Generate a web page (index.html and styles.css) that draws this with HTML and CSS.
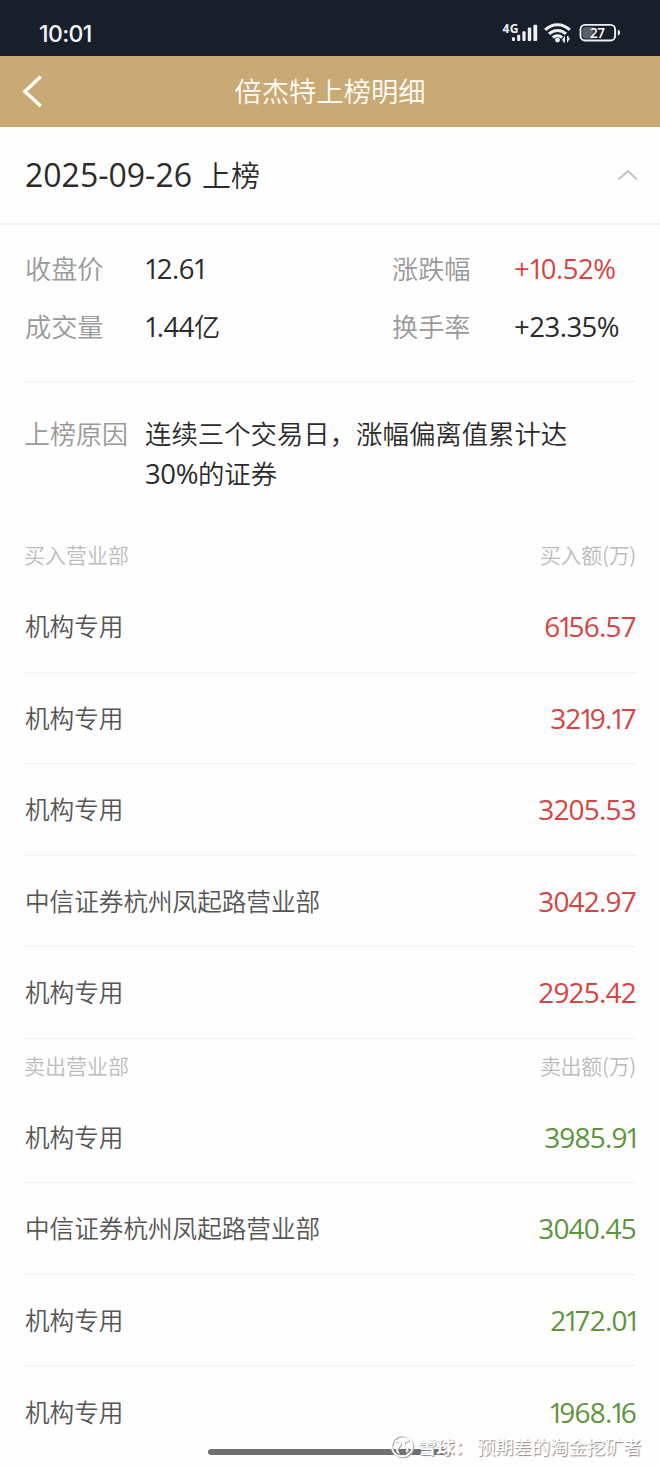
FILE: index.html
```html
<!DOCTYPE html>
<html lang="zh-CN">
<head>
<meta charset="utf-8">
<title>倍杰特上榜明细</title>
<link rel="stylesheet" href="styles.css">
</head>
<body>
<div class="screen">
  <header class="status">
    <span class="clock">10:01</span>
    <svg class="status-icons" width="120" height="26" viewBox="0 0 120 26">
      <text class="net" x="0.5" y="12.5" textLength="16">4G</text>
      <g fill="#eef0f4">
        <rect x="10" y="17.2" width="3" height="3.8" rx="1"/>
        <rect x="15.2" y="14.8" width="3" height="6.2" rx="1"/>
        <rect x="20.4" y="11.2" width="3.2" height="9.8" rx="1"/>
        <rect x="25.8" y="7.6" width="3.4" height="13.4" rx="1"/>
        <rect x="31.4" y="4.8" width="3.8" height="16.2" rx="1"/>
        <circle cx="55.5" cy="20" r="2.4"/>
        <path d="M63 15.600v7h-1.700v-2h-1.600zM65 23v-7h1.600v2h1.600z"/>
      </g>
      <g fill="none" stroke="#eef0f4" stroke-width="3">
        <path d="M43.200 9.900c7-6.900 17.500-6.900 24.600 0M47 13.900c4.900-4.700 12.100-4.700 17 0M50.800 17.600c2.700-2.600 6.700-2.600 9.400 0"/>
        <rect x="78.500" y="4.900" width="34.600" height="15.600" rx="4.500" stroke-width="1.900"/>
      </g>
      <path d="M83 7h8.500v11.400H83a2.600 2.600 0 0 1-2.600-2.600v-6.200A2.600 2.600 0 0 1 83 7z" fill="#5b606b"/>
      <path d="M115.800 9.800c3 .3 3 5.300 0 5.600z" fill="#eef0f4"/>
      <text class="charge" x="88" y="17.500" textLength="15">27</text>
    </svg>
  </header>
  <nav class="titlebar">
    <svg class="back" width="22" height="34" viewBox="0 0 22 34"><path d="M19.800 1.500 3.800 16.500l16 14.500" fill="none" stroke="#fff" stroke-width="3.400"/></svg>
    <h1>倍杰特上榜明细</h1>
  </nav>
  <section class="day">
    <h2><span class="date">2025-09-26</span>上榜</h2>
    <svg width="22" height="14" viewBox="0 0 22 14"><path d="M2.500 11.500 12 3l9 8.500" fill="none" stroke="#c4c4c4" stroke-width="1.900"/></svg>
  </section>
  <main class="body">
    <dl class="stats">
      <dt>收盘价</dt><dd class="lead"><em>1</em>2.<i>6</i><em>1</em></dd>
      <dt>涨跌幅</dt><dd class="up"><i>+</i><em>1</em>0.52%</dd>
      <dt>成交量</dt><dd class="lead"><em>1</em>.44<span class="unit">亿</span></dd>
      <dt>换手率</dt><dd>+23.35%</dd>
    </dl>
    <div class="reason">
      <span class="reason-label">上榜原因</span>
      <p>连续三个交易日，涨幅偏离值累计达<br><span class="pct">30%</span>的证券</p>
    </div>
    <section class="buy">
      <div class="cols"><span>买入营业部</span><span class="amount">买入额(万)</span></div>
      <div class="row"><span>机构专用</span><b><i>6</i><em>1</em>56.57</b></div>
      <div class="row"><span>机构专用</span><b>3<i>2</i><em>1</em>9<i>.</i><em>1</em>7</b></div>
      <div class="row"><span>机构专用</span><b>3205.53</b></div>
      <div class="row"><span>中信证券杭州凤起路营业部</span><b>3042.97</b></div>
      <div class="row"><span>机构专用</span><b>2925.42</b></div>
    </section>
    <section class="sell">
      <div class="cols"><span>卖出营业部</span><span class="amount">卖出额(万)</span></div>
      <div class="row"><span>机构专用</span><b>3985.<i>9</i><em>1</em></b></div>
      <div class="row"><span>中信证券杭州凤起路营业部</span><b>3040.45</b></div>
      <div class="row"><span>机构专用</span><b><i>2</i><em>1</em>72.<i>0</i><em>1</em></b></div>
      <div class="row"><span>机构专用</span><b><em>1</em>968<i>.</i><em>1</em>6</b></div>
    </section>
  </main>
  <div class="home-bar"></div>
  <div class="watermark">
    <svg width="25" height="25" viewBox="0 0 25 25"><g fill="none" stroke-width="1.600"><g stroke="#aaa"><circle cx="13" cy="13" r="10.500"/><path d="M6 8c5 0 7 2 4 5s-3 5 0 7M20 7c-5 1-7 4-4 6s3 4 1 6"/></g><g stroke="#fff"><circle cx="12" cy="12" r="10.500"/><path d="M5 7c5 0 7 2 4 5s-3 5 0 7M19 6c-5 1-7 4-4 6s3 4 1 6"/></g></g></svg>
    <span class="brand">雪球：</span><span class="author">预期差的淘金挖矿者</span>
  </div>
</div>
</body>
</html>
```

FILE: styles.css
```css
* { box-sizing: border-box; margin: 0; padding: 0; }
body { background: #fefefe; font-family: "Noto Sans CJK SC", sans-serif; font-weight: 350; }
.screen { position: relative; width: 660px; height: 1467px; overflow: hidden; background: #fefefe; color: #2b2b2b; }

.status { display: flex; justify-content: space-between; height: 56px; padding: 20px 38px 0 39px; background: #181f2b; }
.clock { font: 500 23px/28px "Inter", sans-serif; letter-spacing: -0.6px; color: #f3f5f8; }
.status-icons { margin: 0 0 0 auto; flex: none; }
.net { font: 700 12px "Open Sans", sans-serif; fill: #eef0f4; }
.charge { font: 600 13.5px "Open Sans", sans-serif; fill: #fff; }

.titlebar { display: grid; grid-template-columns: 22px 1fr 22px; align-items: center; height: 71px; padding: 0 21px; background: #c9a974; }
.titlebar h1 { padding-bottom: 3px; font-size: 27.3px; line-height: 40px; font-weight: 350; color: #fffdf8; text-align: center; }

.day { display: flex; align-items: center; justify-content: space-between; height: 98px; padding: 0 22px 0 25px; border-bottom: 2px solid #f5f5f5; }
.day h2 { display: flex; align-items: baseline; gap: 10px; padding-bottom: 1px; font-size: 29px; line-height: 44px; font-weight: 350; }
.date { font-family: "Open Sans", sans-serif; font-size: 32px; font-weight: 400; }

.body { padding: 0 24px; }
.stats { display: grid; grid-template-columns: 121px 246px 122px 1fr; grid-auto-rows: 58px; align-items: center; height: 157px; padding: 15px 0 0 1px; border-bottom: 1px solid #f1f1f1; font-size: 26.2px; line-height: 40px; }
dt, .reason-label { color: #999; }
dt { padding-bottom: 2px; }
dd { font: 400 27.5px/40px "Open Sans", "Noto Sans CJK SC", sans-serif; letter-spacing: -0.5px; white-space: nowrap; }
.lead { margin-left: -2px; }
.unit { font-size: 26.2px; font-weight: 350; }
i, em { font-style: normal; }
dd i { letter-spacing: -1.6px; }
dd em { letter-spacing: -3px; }
.up, .buy b { color: #d84343; }
.sell b { color: #5e943f; }

.reason { display: grid; grid-template-columns: 121px 1fr; height: 148px; padding-top: 31px; font-size: 26.4px; line-height: 39.5px; }
.reason-label { font-size: 26px; }
.reason p { white-space: nowrap; }
.pct { font: 400 27.5px/39px "Open Sans", sans-serif; letter-spacing: -0.4px; }

.cols { display: flex; align-items: center; justify-content: space-between; height: 51px; padding-bottom: 3px; font-size: 21px; color: #bbb; }
.amount { letter-spacing: -0.3px; }
.sell .cols { height: 53px; padding-bottom: 0; }
.row { display: flex; align-items: center; justify-content: space-between; height: 91.5px; padding-left: 1px; border-bottom: 1.5px solid #f1f1f1; font-size: 24.6px; line-height: 40px; color: #555; }
.row > span { padding-bottom: 2px; }
.row b { font: 400 28px/40px "Open Sans", sans-serif; letter-spacing: -0.8px; }
.row i { letter-spacing: -2.6px; }
.row em { letter-spacing: -5px; }
.sell .row:last-child { border-bottom: 0; }

.home-bar { position: absolute; left: 208px; top: 1449px; width: 244px; height: 6px; border-radius: 3px; background: #707070; }
.watermark { position: absolute; left: 390px; top: 1434px; display: flex; align-items: center; height: 25px; gap: 3px; font-size: 18.3px; font-weight: 400; line-height: 25px; color: #fff; text-shadow: 1px 1px 1px #888; white-space: nowrap; }
.brand { width: 56px; font-weight: 700; }
```
